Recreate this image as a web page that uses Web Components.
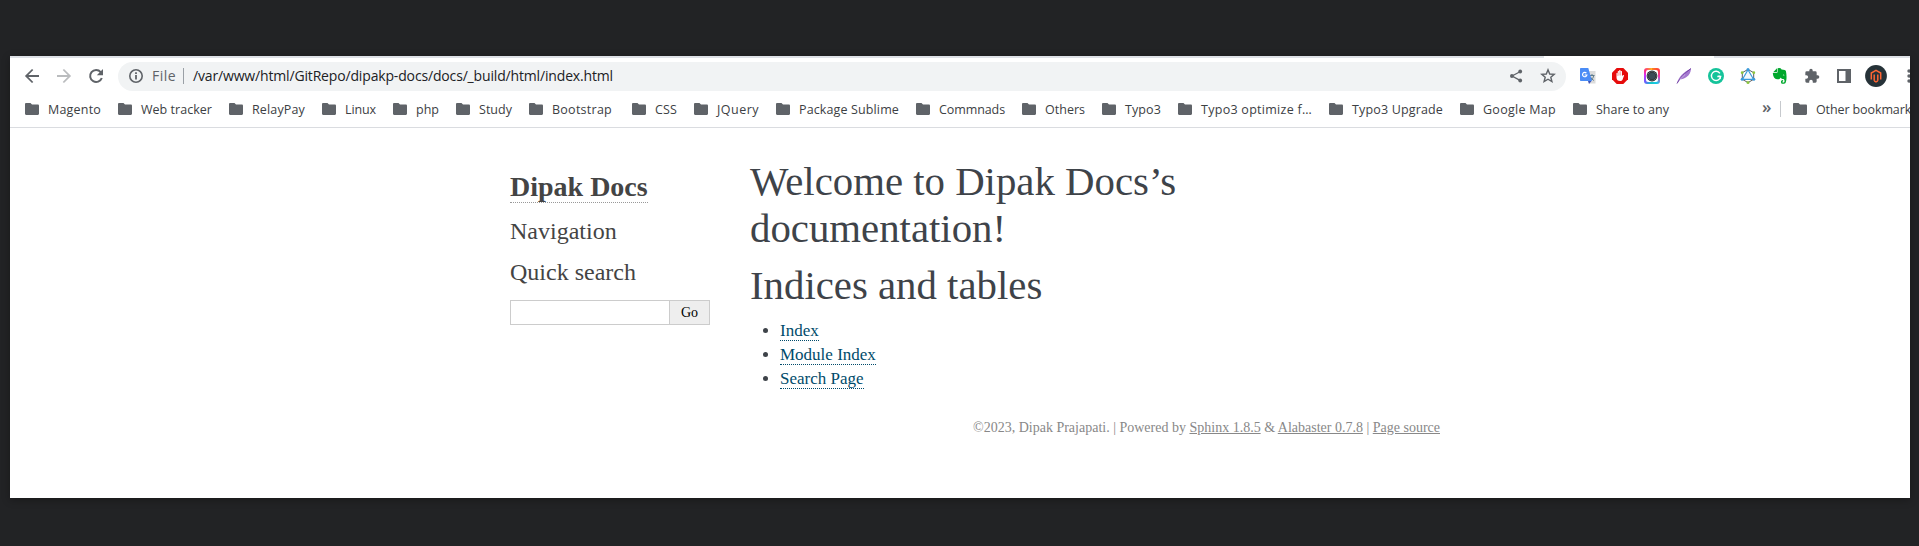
<!DOCTYPE html>
<html lang="en">
<head>
<meta charset="utf-8">
<title>Welcome to Dipak Docs’s documentation!</title>
<style>
html,body{margin:0;height:100%;background:#222325;overflow:hidden}
body{display:flow-root}
</style>
</head>
<body>
<browser-window></browser-window>
<script>
const define=(name,html,after)=>customElements.define(name,class extends HTMLElement{
  constructor(){
    super();
    const t=document.createElement('template');
    t.innerHTML=html;
    this.attachShadow({mode:'open'}).append(t.content.cloneNode(true));
  }
  connectedCallback(){ if(after) after.call(this,this.shadowRoot); }
});

/* Label whose tracking adapts so that the text fills the width attribute. */
define('fit-text',`<style>:host{display:block;white-space:pre;flex:none}span{display:inline-block}</style><span><slot></slot></span>`,function(r){
  const w=+this.getAttribute('width'),s=r.querySelector('span');
  this.style.width=w+'px';
  const n=this.textContent.length;
  s.style.letterSpacing=((w-s.getBoundingClientRect().width)/n)+'px';
});

const icons={
back:['0 0 16 16','<path d="M15 7H4.4l4.9-4.9L8 .9.9 8 8 15.1l1.3-1.2L4.4 9H15z" fill="#5f6368"/>'],
forward:['0 0 16 16','<path d="M1 7h10.6L6.7 2.1 8 .9 15.1 8 8 15.1l-1.3-1.2L11.6 9H1z" fill="#babcbe"/>'],
reload:['0 0 16 16','<path d="M12.7 4.1A6 6 0 1 0 13.8 10" fill="none" stroke="#5f6368" stroke-width="2"/><path d="M15 1v6.2H8.8z" fill="#5f6368"/>'],
info:['0 0 16 16','<circle cx="8" cy="8" r="6.2" fill="none" stroke="#5f6368" stroke-width="1.6"/><path d="M7.1 7h1.8v4.5H7.1zM7.1 4.3h1.8V6H7.1z" fill="#5f6368"/>'],
folder:['0 0 14 12','<path d="M1.2 0h4.3L7 1.6h5.8c.7 0 1.2.5 1.2 1.2v8c0 .7-.5 1.2-1.2 1.2H1.2C.5 12 0 11.500 0 10.800V1.200C0 .5.5 0 1.200 0z" fill="#5f6368"/>'],
share:['0 0 16 16','<path d="M12 3.700 4 8l8 4.400" fill="none" stroke="#5f6368" stroke-width="1.300"/><g fill="#5f6368"><circle cx="12.200" cy="3.500" r="1.900"/><circle cx="3.900" cy="8" r="1.900"/><circle cx="12.200" cy="12.500" r="1.900"/></g>'],
star:['0 0 16 16','<path d="m8 1.800 1.700 4.200 4.500.3-3.400 2.900 1.100 4.400L8 11.200l-3.900 2.400 1.100-4.400-3.400-2.900L6.300 6z" fill="none" stroke="#5f6368" stroke-width="1.400"/>'],
translate:['0 0 16 16','<path d="M6 3h9.500v12.500H9z" fill="#dcdcdc"/><path d="M9.500 7.500h5M12 6v1.500M10.200 12.500c2-1 3.200-2.700 3.500-5M10.500 9c.7 1.600 1.800 2.700 3.400 3.500" fill="none" stroke="#607d8b" stroke-width="1"/><path d="M8 13h3.500L9 16z" fill="#3f51b5"/><path d="M.7 0h7.600L12 13H.7Q0 13 0 12.300V.7Q0 0 .7 0z" fill="#4a8cf6"/><path d="M6.400 5.100A2.200 2.200 0 1 0 6.900 7H4.700" fill="none" stroke="#fff" stroke-width="1.200"/>'],
block:['0 0 16 16','<path d="M4.700 0h6.600L16 4.700v6.600L11.300 16H4.700L0 11.300V4.700z" fill="#e60b0b"/><path d="M4.500 8V5.200q.7-.8 1.300 0V3.300q.7-.8 1.300 0v-.8q.8-.8 1.500 0v.8q.8-.8 1.400 0v5l.9-1.200q.9-.5 1.200.3L10.400 12q-.6 1-2 1-3.900 0-3.900-3.500z" fill="#fff"/><path d="M5.800 5v3M7.100 3.500V7.500M8.600 3.500v4" stroke="#e60b0b" stroke-width=".35"/>'],
feather:['0 0 16 16','<path d="M1 15C2.500 9.500 7 4 15 .5c-.2 4-1.600 6.500-4.500 8.500-2 1.600-4.500 2.500-6.700 2.500z" fill="#a477cf"/><path d="M1 15.500C4 10 8.500 5 15 .5" fill="none" stroke="#7140a3" stroke-width="1"/><path d="m3.800 11.500 5.500-5.300" stroke="#eee1fa" stroke-width=".6"/>'],
grammar:['0 0 16 16','<circle cx="8" cy="8" r="8" fill="#15c39a"/><path d="M11.900 5.400A4.600 4.600 0 1 0 12.600 8.500H9.300" fill="none" stroke="#fff" stroke-width="1.400"/><path d="m10.500 7.700 2.100.8-.6 2.500" fill="none" stroke="#fff" stroke-width="1.100"/>'],
graph:['0 0 16 16','<path d="M8 1.400 13.700 4.700v6.600L8 14.600l-5.700-3.300V4.700z" fill="#fff" stroke="#5b6165" stroke-width="1"/><path d="M8 1.800 13.500 11.300H2.500z" fill="#f4f9fd" stroke="#3a9bdc" stroke-width="1.200"/><g fill="#3a9bdc"><circle cx="8" cy="1.600" r="1.500"/><circle cx="2.200" cy="11.300" r="1.500"/><circle cx="13.800" cy="11.300" r="1.500"/></g><g fill="#8cc63f"><circle cx="2.200" cy="4.700" r="1.400"/><circle cx="13.800" cy="4.700" r="1.400"/><circle cx="8" cy="14.500" r="1.500"/></g>'],
evernote:['0 0 16 16','<path d="M5 .2v3.200q0 .9-.9.9H1.200z" fill="#00a82d"/><path d="M5.600.3q3-.8 4 1.200 4 .2 4.300 1.500c.9 4 .9 9-.3 11.700-.5 1.400-3.800 1.500-4.400.2-.6-1.800.2-3 1.900-2.900v1.300c-1 0-1 1.200 0 1.300 1.700.1 2-2.900.3-3.500-1.500-.4-2.500-.7-2.800-1.700C8 11 6.500 11.500 5 11.200 2.500 11 1 8.700.8 5h3.500q1.300-.1 1.300-1.300z" fill="#00a82d"/><path d="M10.800 7.200q.8-1.500 1.700.2z" fill="#fff"/>'],
puzzle:['0 0 24 24','<path d="M20.500 11H19V7a2 2 0 0 0-2-2h-4V3.500a2.500 2.500 0 0 0-5 0V5H4a2 2 0 0 0-2 2v3.800h1.500a2.700 2.700 0 0 1 0 5.400H2V20a2 2 0 0 0 2 2h3.800v-1.500a2.700 2.700 0 0 1 5.400 0V22H17a2 2 0 0 0 2-2v-4h1.500a2.500 2.500 0 0 0 0-5z" fill="#5f6368"/>'],
panel:['0 0 16 16','<path d="M1 1h14v14H1z" fill="#5f6368"/><path d="M3 3h6.500v10H3z" fill="#fff"/>'],
avatar:['0 0 22 22','<circle cx="11" cy="11" r="10.900" fill="#263238"/><path d="M6.300 14.500V8L11 5.300 15.700 8v6.500M9.200 15.800V9.500M12.800 15.800V9.500M9.200 15.800l1.800 1 1.800-1" fill="none" stroke="#ff6533" stroke-width="1.500"/>'],
dots:['0 0 4 16','<g fill="#5f6368"><circle cx="2" cy="3" r="1.700"/><circle cx="2" cy="8" r="1.700"/><circle cx="2" cy="13" r="1.700"/></g>']
};
define('ui-icon',`<style>:host{display:block;flex:none;width:16px;height:16px}svg{display:block;width:100%;height:100%}</style><svg></svg>`,function(r){
  const [box,body]=icons[this.getAttribute('name')],s=r.querySelector('svg');
  s.setAttribute('viewBox',box); s.innerHTML=body;
});

define('camera-icon',`<style>
:host{display:grid;place-items:center;flex:none;width:16px;height:16px;border-radius:3px;background:conic-gradient(from 0deg,#ff8a1c,#ff3d3d 45deg,#f032b8 95deg,#19c8e8 145deg,#16c7c7 190deg,#6c5cff 230deg,#d62fff 275deg,#ff2f7d 310deg,#ffc21c 360deg)}
svg{display:block;width:16px;height:16px}
</style><svg viewBox="0 0 16 16"><rect x="2" y="2" width="12" height="12" rx="2" fill="#fff"/><circle cx="8" cy="8" r="5.400" fill="#1c2226"/><circle cx="8" cy="8" r="4.300" fill="none" stroke="#8b979d" stroke-width=".6"/><circle cx="8" cy="8" r="3.300" fill="#3b4c57"/></svg>`);

define('address-bar',`<style>
:host{display:flex;align-items:center;box-sizing:border-box;flex:none;width:1448px;height:29px;padding:0 10px 1px;border-radius:15px;background:#f1f3f4;font:14px/20px "Open Sans",sans-serif;color:#202124}
fit-text{margin-top:-1px}
.file{margin-left:8px;color:#5f6368}
.bar{width:1px;height:16px;background:#9aa0a6;margin:0 9px 0 7px}
.share{margin-left:auto;margin-right:16px}
</style>
<ui-icon name="info"></ui-icon><fit-text class="file" width="24">File</fit-text><span class="bar"></span>
<fit-text width="420">/var/www/html/GitRepo/dipakp-docs/docs/_build/html/index.html</fit-text>
<ui-icon class="share" name="share"></ui-icon><ui-icon name="star"></ui-icon>`);

define('tool-bar',`<style>
:host{display:flex;align-items:center;height:37px;padding-left:14px;box-sizing:border-box}
.nav{display:flex;gap:16px;margin-right:14px;padding-bottom:1px}
.ext{display:flex;align-items:center;gap:16px;margin-left:14px;padding-bottom:1px}
.avatar{width:22px;height:22px;margin-left:-3px}
.dots{width:4px;margin-left:4px}
</style>
<div class="nav"><ui-icon name="back"></ui-icon><ui-icon name="forward"></ui-icon><ui-icon name="reload"></ui-icon></div>
<address-bar></address-bar>
<div class="ext"><ui-icon name="translate"></ui-icon><ui-icon name="block"></ui-icon><camera-icon></camera-icon><ui-icon name="feather"></ui-icon><ui-icon name="grammar"></ui-icon><ui-icon name="graph"></ui-icon><ui-icon name="evernote"></ui-icon><ui-icon name="puzzle"></ui-icon><ui-icon name="panel"></ui-icon><ui-icon class="avatar" name="avatar"></ui-icon><ui-icon class="dots" name="dots"></ui-icon></div>`);

define('book-mark',`<style>
:host{display:flex;flex:none;align-items:center;gap:9px}
ui-icon{width:14px;height:12px}
::slotted(fit-text){margin:1px 0 -1px}
</style><ui-icon name="folder"></ui-icon><slot></slot>`);

const marks=[['Magento',53],['Web tracker',71],['RelayPay',53],['Linux',31],['php',23],['Study',33],['Bootstrap',60,3],['CSS',22],['JQuery',42],['Package Sublime',100],['Commnads',66],['Others',40],['Typo3',36],['Typo3 optimize f…',111],['Typo3 Upgrade',91],['Google Map',73],['Share to any',73]];
define('bookmark-bar',`<style>
:host{display:flex;align-items:center;height:33px;padding:0 0 4px 15px;border-bottom:1px solid #dadce0;box-sizing:border-box;font:12.500px/18px "Open Sans",sans-serif;color:#3c4043;overflow:hidden}
.list{display:flex;gap:17px}
.more{margin:-4px 0 0 auto;font-size:17px;font-weight:600;color:#5f6368}
.rule{width:1px;height:16px;background:#c6c9cd;margin:0 12px 0 8px}
.end{width:117px}
</style>
<div class="list">${marks.map(m=>`<book-mark${m[2]?` style="margin-right:${m[2]}px"`:''}><fit-text width="${m[1]}">${m[0]}</fit-text></book-mark>`).join('')}</div>
<fit-text class="more" width="10">»</fit-text><span class="rule"></span>
<book-mark class="end"><fit-text width="101">Other bookmarks</fit-text></book-mark>`);

define('doc-sidebar',`<style>
:host{display:block;width:200px;padding:0 10px;color:#444;font:24px/28px "Liberation Serif",serif}
.logo{font-size:28px;font-weight:bold;line-height:32px;height:32px;margin-top:43px}
.logo a{border-bottom:1px dotted #999}
h3{font:inherit;margin:0}
.nav{margin-top:14px}
.quick{margin-top:13px}
form{display:flex;margin-top:14px;height:25px}
input{box-sizing:border-box;width:160px;height:25px;margin:0;border:1px solid #ccc;padding:0;background:#fff;border-radius:0}
button{box-sizing:border-box;width:41px;height:25px;margin-left:-1px;border:1px solid #ccc;background:#eee;color:#000;padding:0;font:14px "Liberation Serif",serif;border-radius:0}
</style>
<div class="logo"><a>Dipak Docs</a></div>
<h3 class="nav">Navigation</h3><h3 class="quick">Quick search</h3>
<form><input type="text" aria-label="Quick search"><button type="button">Go</button></form>`);

define('doc-body',`<style>
:host{display:block;flex:1;padding:0 30px;color:#3e4349;font:17px/24px "Liberation Serif",serif}
h1{font-size:40.800px;font-weight:normal;line-height:47px;margin:0;width:460px}
.first{margin-top:30px}
.second{margin-top:10px}
ul{margin:10px 0 0 30px;padding:0}
a{color:#004b6b;border-bottom:1px dotted #004b6b}
</style>
<h1 class="first">Welcome to Dipak Docs’s documentation!</h1>
<h1 class="second">Indices and tables</h1>
<ul><li><a>Index</a></li><li><a>Module Index</a></li><li><a>Search Page</a></li></ul>`);

define('doc-page',`<style>
:host{display:block;width:940px;margin-left:490px}
main{display:flex}
footer{margin-top:27px;text-align:right;font:14px/20px "Liberation Serif",serif;color:#888}
a{text-decoration:underline}
</style>
<main><doc-sidebar></doc-sidebar><doc-body></doc-body></main>
<footer>©2023, Dipak Prajapati. | Powered by <a>Sphinx 1.8.5</a> &amp; <a>Alabaster 0.7.8</a> | <a>Page source</a></footer>`);

define('browser-window',`<style>
:host{display:block;box-sizing:border-box;width:1900px;height:442px;margin:56px 0 0 10px;background:#fff;overflow:hidden;box-shadow:0 2px 8px rgba(0,0,0,.3)}
:host::before{content:"";display:block;height:2px;background:linear-gradient(90deg,#dee1e6 1534px,#fff 1534px 1704px,#dee1e6 1704px)}
</style><tool-bar></tool-bar><bookmark-bar></bookmark-bar><doc-page></doc-page>`);
</script>
</body>
</html>
